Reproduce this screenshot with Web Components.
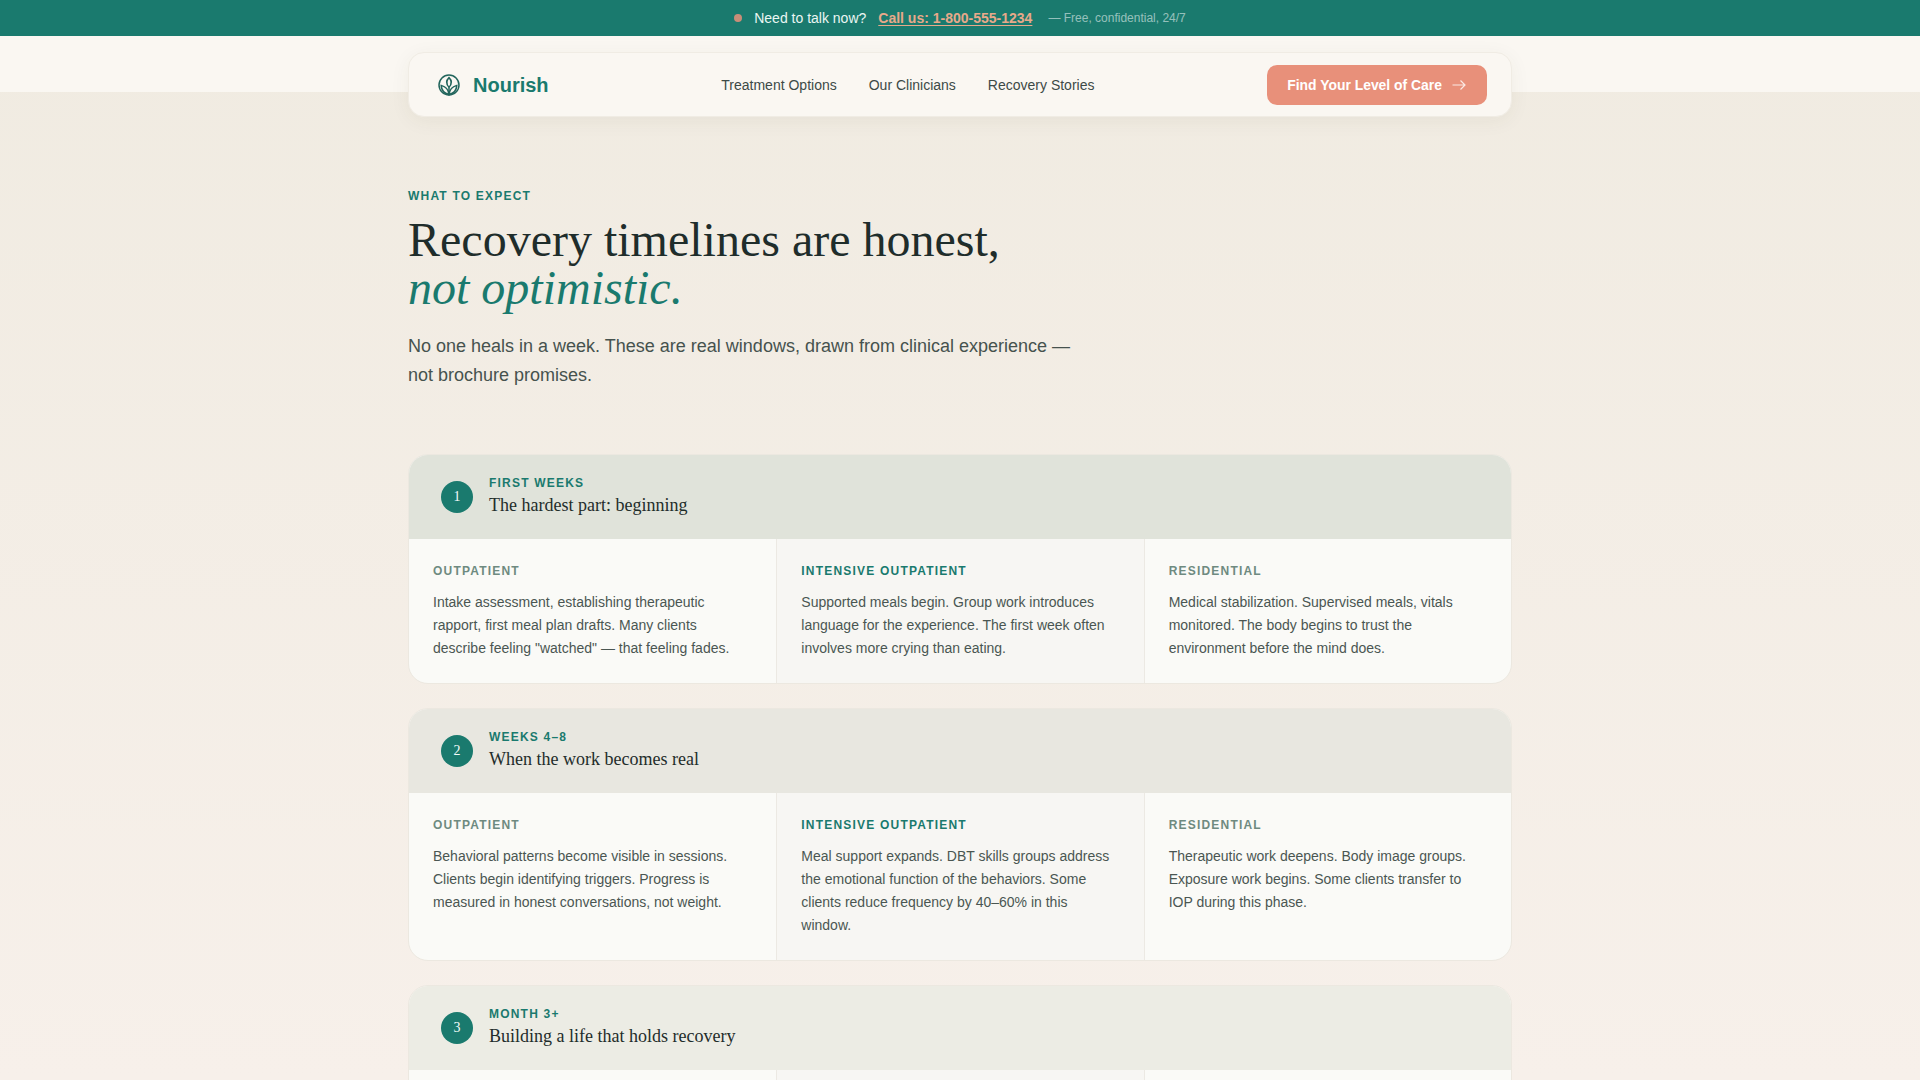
<!DOCTYPE html>
<html lang="en"><head><meta charset="utf-8"><title>Nourish</title>
<style>
html,body{margin:0;padding:0;height:100vh;overflow:hidden}
body{background:linear-gradient(180deg,#f0ebe1 0%,#f7f0ea 100%);font-family:"Liberation Sans",Arial,sans-serif;color:#1f2d2b}
</style></head><body>
<crisis-bar></crisis-bar>
<site-header>
  <nav-link>Treatment Options</nav-link>
  <nav-link>Our Clinicians</nav-link>
  <nav-link>Recovery Stories</nav-link>
</site-header>
<main-column>
  <page-hero></page-hero>
  <phase-card step="1" when="First weeks" title="The hardest part: beginning" tone="#e0e3da">
    <care-cell label="Outpatient">Intake assessment, establishing therapeutic rapport, first meal plan drafts. Many clients describe feeling "watched" — that feeling fades.</care-cell>
    <care-cell label="Intensive Outpatient" featured>Supported meals begin. Group work introduces language for the experience. The first week often involves more crying than eating.</care-cell>
    <care-cell label="Residential">Medical stabilization. Supervised meals, vitals monitored. The body begins to trust the environment before the mind does.</care-cell>
  </phase-card>
  <phase-card step="2" when="Weeks 4–8" title="When the work becomes real" tone="#e8e7e0">
    <care-cell label="Outpatient">Behavioral patterns become visible in sessions. Clients begin identifying triggers. Progress is measured in honest conversations, not weight.</care-cell>
    <care-cell label="Intensive Outpatient" featured>Meal support expands. DBT skills groups address the emotional function of the behaviors. Some clients reduce frequency by 40–60% in this window.</care-cell>
    <care-cell label="Residential">Therapeutic work deepens. Body image groups. Exposure work begins. Some clients transfer to IOP during this phase.</care-cell>
  </phase-card>
  <phase-card step="3" when="Month 3+" title="Building a life that holds recovery" tone="#ecece4">
    <care-cell></care-cell>
    <care-cell featured></care-cell>
    <care-cell></care-cell>
  </phase-card>
</main-column>
<script>
function def(name, html, init){
  customElements.define(name, class extends HTMLElement{
    constructor(){super();const r=this.attachShadow({mode:'open'});r.innerHTML=html;}
    connectedCallback(){ if(init) init(this,this.shadowRoot); }
  });
}
def('crisis-bar',`<style>
:host{display:flex;align-items:center;justify-content:center;height:36px;background:#1a7a6e;color:#eaf6f3;font-size:14px}
i{width:8px;height:8px;border-radius:50%;background:#e8907a;opacity:.85;margin-right:12px}
a{color:#e8a98a;font-weight:700;text-decoration:underline;text-underline-offset:2px;margin:0 16px 0 12px}
small{font-size:12px;color:rgba(255,255,255,.55)}
</style><i></i><span>Need to talk now?</span><a>Call us: 1-800-555-1234</a><small>— Free, confidential, 24/7</small>`);
def('site-header',`<style>
:host{display:block;height:56px;background:#faf7f2;padding-top:16px;box-sizing:border-box}
.card{box-sizing:border-box;width:1104px;height:65px;margin:0 auto;background:#faf7f2;border:1px solid #f0ece4;border-radius:16px;box-shadow:0 4px 20px rgba(60,60,40,.06);display:flex;align-items:center;justify-content:space-between;padding:0 24px 0 28px}
.logo{display:flex;align-items:center;gap:12px;font-size:20px;font-weight:700;color:#1a7a6e}
.logo span{padding-top:1px}
svg{display:block}
.links{display:flex;gap:32px}
.cta{display:flex;align-items:center;gap:9px;height:40px;padding:0 20px;border-radius:10px;background:#e8907a;color:#fff;font-size:13.92px;font-weight:700}
</style><div class="card">
<div class="logo"><svg width="24" height="24" viewBox="0 0 24 24" fill="none" stroke="#22655c" stroke-width="1.5"><circle cx="12" cy="12" r="10"/><path d="M12 4.6C15 7.6 15 11 12 14.2C9 11 9 7.6 12 4.6Z"/><path d="M12 21.8V14.2"/><path d="M12 21.5C11.6 17 8.6 13.6 4.2 12.4C4.4 17 7.4 20.4 12 21.5Z"/><path d="M12 21.5C12.4 17 15.4 13.6 19.8 12.4C19.6 17 16.6 20.4 12 21.5Z"/></svg><span>Nourish</span></div>
<div class="links"><slot></slot></div>
<div class="cta"><span>Find Your Level of Care</span><svg width="16" height="16" viewBox="0 0 16 16" fill="none" stroke="#fff" stroke-opacity=".8" stroke-width="1.2"><path d="M1.5 8H14M9.5 3.5L14 8L9.5 12.5"/></svg></div>
</div>`);
def('nav-link',`<style>:host{display:block;font-size:14px;color:#3d4a47}</style><slot></slot>`);
def('main-column',`<style>:host{display:block;width:1104px;margin:0 auto}</style><slot></slot>`);
def('page-hero',`<style>
:host{display:block;padding-top:97px;margin-bottom:64px}
.eyebrow{font-size:12px;font-weight:700;letter-spacing:.1em;line-height:14px;color:#1a7a6e;text-transform:uppercase;margin-bottom:13px}
h1{margin:0 0 20px;font:400 48px/48px "Liberation Serif","Times New Roman",serif;color:#1f2d2b}
em{color:#1a7a6e}
p{margin:0;width:680px;font-size:18px;line-height:28.8px;color:#46524e}
</style><div class="eyebrow">What to expect</div><h1>Recovery timelines are honest,<br><em>not optimistic.</em></h1><p>No one heals in a week. These are real windows, drawn from clinical experience — not brochure promises.</p>`);
def('phase-card',`<style>
:host{display:block;margin-bottom:24px;border:1px solid #ece8e0;border-radius:20px;overflow:hidden;background:#fafaf7}
.head{display:flex;align-items:center;gap:16px;height:84px;padding:0 32px;box-sizing:border-box}
.num{width:32px;height:32px;border-radius:50%;background:#1a7a6e;color:#f5fbf9;display:flex;align-items:center;justify-content:center;font:14px "Liberation Serif",serif}
.when{font-size:12px;font-weight:700;letter-spacing:.1em;line-height:15px;color:#1a7a6e;text-transform:uppercase;margin-bottom:2px}
.title{font:18px/24px "Liberation Serif",serif;color:#1f2d2b}
.cells{display:grid;grid-template-columns:repeat(3,1fr)}
</style><div class="head"><div class="num"></div><div><div class="when"></div><div class="title"></div></div></div><div class="cells"><slot></slot></div>`,(el,r)=>{
  r.querySelector('.num').textContent=el.getAttribute('step');
  r.querySelector('.when').textContent=el.getAttribute('when');
  r.querySelector('.title').textContent=el.getAttribute('title');
  r.querySelector('.head').style.background=el.getAttribute('tone');
});
def('care-cell',`<style>
:host{display:block;box-sizing:border-box;padding:24px 24px 22.8px;border-left:1px solid #ece9e3;min-height:144px}
:host(:first-child){border-left:0}
:host([featured]){background:#f7f6f3}
.label{font-size:12px;font-weight:700;letter-spacing:.1em;line-height:16px;color:#6e8a80;text-transform:uppercase;margin-bottom:12px}
:host([featured]) .label{color:#1a7a6e}
.t{font-size:14px;line-height:23.1px;color:#4a5652}
</style><div class="label"></div><div class="t"><slot></slot></div>`,(el,r)=>{
  r.querySelector('.label').textContent=el.getAttribute('label')||'';
});
</script>
</body></html>
